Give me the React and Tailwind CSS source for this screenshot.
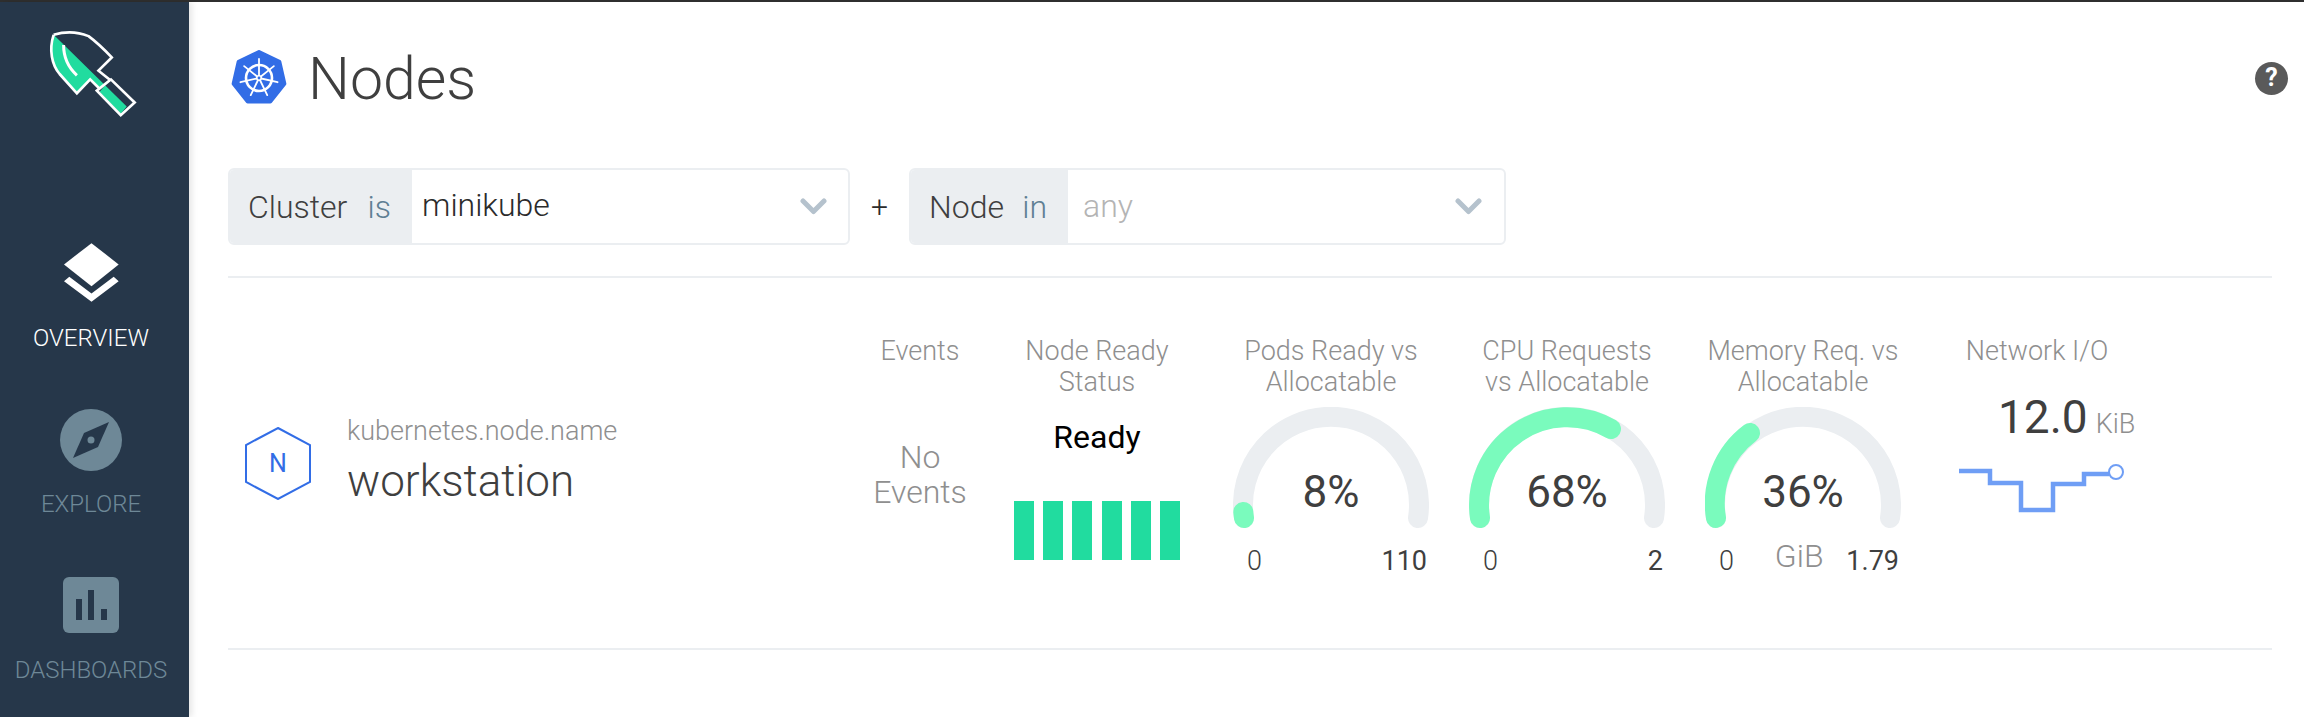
const spokes = [0, 1, 2, 3, 4, 5, 6].map((i) => (i * 360) / 7)

const heptagon = spokes
  .map((deg) => {
    const a = ((deg - 90) * Math.PI) / 180
    return `${28 + 26 * Math.cos(a)},${28 + 26 * Math.sin(a)}`
  })
  .join(' ')

const Logo = () => (
  <svg width="93" height="90" viewBox="134 90 280 270" fill="none">
    <path d="M160 104 L380 320 L362 342 L298 276 L328 240 L300 268 L270 238 L230 280 L178 222 C155 195 145 150 160 104Z" fill="#21dc9f" />
    <path d="M160 104 Q215 88 265 108 Q295 130 335 172 L295 212 L330 240 L290 272 L362 346 L404 308 L330 236" stroke="#fff" strokeWidth="8" strokeLinejoin="miter" />
    <path d="M160 104 C145 150 155 195 178 222 L230 280 L270 238 L300 268" stroke="#fff" strokeWidth="8" />
    <path d="M190 135 Q190 190 230 226" stroke="#fff" strokeWidth="9" />
  </svg>
)

const LayersIcon = () => (
  <svg width="55" height="59" viewBox="192 728 166 177" fill="#fff">
    <path d="M275 728 L357 792 L275 858 L192 792Z" />
    <path d="M192 843 L208 829 L275 880 L342 829 L357 843 L275 905Z" />
  </svg>
)

const CompassIcon = () => (
  <svg width="62" height="62" viewBox="0 0 62 62">
    <circle cx="31" cy="31" r="31" fill="#6e8897" />
    <path d="M49 13 L38 38 L13 49 L24 24Z" fill="#26374a" />
    <circle cx="31" cy="31" r="3.5" fill="#6e8897" />
  </svg>
)

const DashboardIcon = () => (
  <svg width="56" height="56" viewBox="0 0 56 56">
    <rect width="56" height="56" rx="6" fill="#6e8897" />
    <rect x="13" y="22" width="6" height="21" fill="#26374a" />
    <rect x="25" y="13" width="6" height="30" fill="#26374a" />
    <rect x="38" y="32" width="6" height="11" fill="#26374a" />
  </svg>
)

const KubeIcon = () => (
  <svg width="56" height="56" viewBox="0 0 56 56">
    <polygon points={heptagon} fill="#326de6" stroke="#326de6" strokeWidth="4" strokeLinejoin="round" />
    <circle cx="28" cy="28" r="13" fill="none" stroke="#fff" strokeWidth="2.6" />
    {spokes.map((deg) => (
      <path key={deg} d="M28 28 L28 9" stroke="#fff" strokeWidth="1.8" strokeLinecap="round" transform={`rotate(${deg} 28 28)`} />
    ))}
    <circle cx="28" cy="28" r="3" fill="#fff" />
    <circle cx="28" cy="28" r="1.4" fill="#326de6" />
  </svg>
)

const Chevron = () => (
  <svg width="27" height="17" viewBox="0 0 27 17" fill="none">
    <path d="M3 3 L13.5 13.5 L24 3" stroke="#b5c2cd" strokeWidth="5" strokeLinecap="round" strokeLinejoin="round" />
  </svg>
)

const NavItem = ({ icon, label, active, className }) => (
  <div className={`flex flex-col items-center ${className}`}>
    {icon}
    <span className={`text-[24px] leading-[30px] font-light ${active ? 'text-white' : 'text-[#6e8897]'}`}>{label}</span>
  </div>
)

const Filter = ({ name, op, value, muted, labelWidth, width, valueClass }) => (
  <div className={`flex h-[77px] rounded-md border-2 border-[#ebeef1] overflow-hidden ${width}`}>
    <div className={`flex items-center justify-between bg-[#ebeef1] pl-[18px] pr-[21px] text-[32px] font-light ${labelWidth}`}>
      <span className="text-[#3f3f3f]">{name}</span>
      <span className="text-[#5f7f94]">{op}</span>
    </div>
    <div className={`flex flex-1 items-center justify-between ${valueClass}`}>
      <span className={`text-[32px] font-light relative ${muted ? '-top-[1px] text-[#b4b4b4]' : '-top-[2px] text-[#2b2b2b]'}`}>{value}</span>
      <Chevron />
    </div>
  </div>
)

const Heading = ({ children, className = '' }) => (
  <div className={`text-center text-[27px] leading-[31px] font-light text-[#8f8f8f] ${className}`}>{children}</div>
)

const Gauge = ({ title, percent, end, max, unit, className }) => (
  <div className={`w-[196px] ${className}`}>
    <Heading>{title}</Heading>
    <div className="relative mt-[9px]">
      <svg width="196" height="122" viewBox="0 0 196 122" fill="none" className="block">
        <path d="M11 111 A88 88 0 1 1 185 111" stroke="#ebeef1" strokeWidth="20" strokeLinecap="round" />
        <path d={`M11 111 A88 88 0 0 1 ${end}`} stroke="#7afbbd" strokeWidth="20" strokeLinecap="round" />
      </svg>
      <div className="absolute inset-x-0 top-[62px] text-center text-[44px] leading-[46px] text-[#3f3f3f]">{percent}</div>
    </div>
    <div className="mt-[17px] flex items-center justify-between pl-[14px] pr-[2px] text-[27px] leading-[30px] text-[#3f3f3f]">
      <span className="font-light">0</span>
      {unit && <span className="relative -top-[5px] left-[9px] text-[32px] font-light text-[#8f8f8f]">{unit}</span>}
      <span>{max}</span>
    </div>
  </div>
)

export default function App() {
  return (
    <div className="flex h-screen w-full flex-col overflow-hidden bg-white font-['Roboto',sans-serif]">
      <div className="h-[2px] bg-[#2f2f2f]" />
      <div className="flex flex-1">
        <aside className="flex w-[189px] flex-col items-center bg-[#26374a] pr-[7px] pt-[28px] shadow-[3px_0_6px_rgba(0,0,0,0.1)]">
          <Logo />
          <NavItem className="mt-[123px] gap-[21px]" icon={<LayersIcon />} label="OVERVIEW" active />
          <NavItem className="mt-[56px] gap-[18px]" icon={<CompassIcon />} label="EXPLORE" />
          <NavItem className="mt-[58px] gap-[22px]" icon={<DashboardIcon />} label="DASHBOARDS" />
        </aside>

        <main className="flex-1 pl-[39px] pr-[32px] pt-[48px]">
          <header className="-mr-[16px] flex items-center justify-between">
            <div className="flex items-center gap-[21px]">
              <div className="ml-[3px]"><KubeIcon /></div>
              <h1 className="relative top-[1px] text-[59px] leading-[56px] font-light text-[#3f3f3f]">Nodes</h1>
            </div>
            <div className="flex h-[33px] w-[33px] items-center justify-center rounded-full bg-[#5a5a5a] text-[25px] font-bold text-white">?</div>
          </header>

          <div className="mt-[62px] flex items-center">
            <Filter name="Cluster" op="is" value="minikube" labelWidth="w-[182px]" width="w-[622px]" valueClass="pl-[10px] pr-[21px]" />
            <span className="w-[59px] text-center text-[30px] font-light text-[#2b2b2b]">+</span>
            <Filter name="Node" op="in" value="any" muted labelWidth="w-[157px]" width="w-[597px]" valueClass="pl-[15px] pr-[22px]" />
          </div>

          <div className="mt-[31px] flex h-[374px] items-start border-y-2 border-[#ebeef1]">
            <div className="flex w-[632px] items-center self-center pl-[17px]">
              <svg width="66" height="73" viewBox="0 0 66 73" fill="none">
                <polygon points="33,1 65,18 65,55 33,72 1,55 1,18" stroke="#326de6" strokeWidth="2" />
                <text x="33" y="45" textAnchor="middle" fontSize="25" fill="#326de6">N</text>
              </svg>
              <div className="ml-[36px] -translate-y-[2px]">
                <div className="text-[27px] leading-[36px] font-light text-[#8f8f8f]">kubernetes.node.name</div>
                <div className="mt-[4px] text-[44px] leading-[56px] font-light text-[#3f3f3f]">workstation</div>
              </div>
            </div>

            <div className="w-[120px] pt-[58px]">
              <Heading>Events</Heading>
              <div className="mt-[73px] text-center text-[32px] leading-[35px] font-light text-[#8f8f8f]">No<br />Events</div>
            </div>

            <div className="ml-[32px] w-[170px] pt-[58px]">
              <Heading>Node Ready<br />Status</Heading>
              <div className="mt-[21px] text-center text-[32px] leading-[36px] text-black">Ready</div>
              <div className="mt-[46px] flex justify-center gap-[9.4px]">
                {[0, 1, 2, 3, 4, 5].map((i) => (
                  <div key={i} className="h-[59px] w-[20px] bg-[#21dc9f]" />
                ))}
              </div>
            </div>

            <Gauge className="ml-[51px] pt-[58px]" title={<>Pods Ready vs<br />Allocatable</>} percent="8%" end="10.3 105" max="110" />
            <Gauge className="ml-[40px] pt-[58px]" title={<>CPU Requests<br />vs Allocatable</>} percent="68%" end="142 22" max="2" />
            <Gauge className="ml-[40px] pt-[58px]" title={<>Memory Req. vs<br />Allocatable</>} percent="36%" end="45 26" max="1.79" unit="GiB" />

            <div className="ml-[56px] w-[180px] pt-[58px]">
              <Heading className="w-[160px]">Network I/O</Heading>
              <div className="mt-[25px] flex items-baseline pl-[41px] leading-[50px]">
                <span className="text-[46px] text-[#3f3f3f]">12.0</span>
                <span className="ml-[8px] text-[27px] font-light text-[#8f8f8f]">KiB</span>
              </div>
              <svg width="170" height="55" viewBox="0 0 170 55" fill="none" className="mt-[12px] block">
                <path d="M2 10 H33 V22 H64 V49 H96 V23 H127 V13 H152" stroke="#6f9ef5" strokeWidth="4.5" />
                <circle cx="159" cy="11" r="7" fill="#fff" stroke="#6f9ef5" strokeWidth="2" />
              </svg>
            </div>
          </div>
        </main>
      </div>
    </div>
  )
}
